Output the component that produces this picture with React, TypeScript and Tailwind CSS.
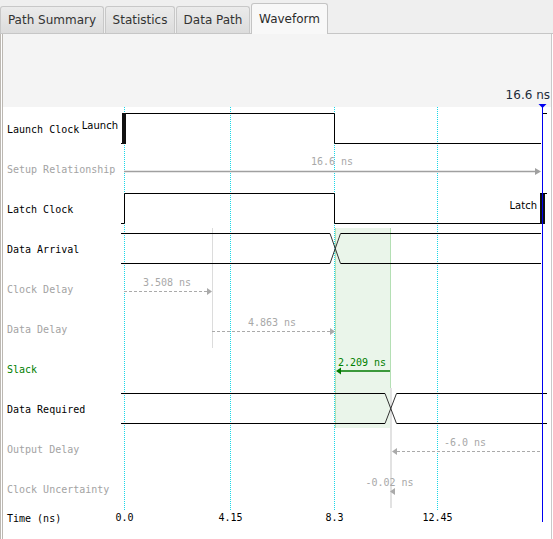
import React from "react";

const tabs = [
  { name: "Path Summary", w: "w-[104px]" },
  { name: "Statistics", w: "w-[70px]" },
  { name: "Data Path", w: "w-[74px]" },
  { name: "Waveform", w: "w-[77px]", active: true },
];

const rows = [
  { label: "Launch Clock", tone: "text-black" },
  { label: "Setup Relationship", tone: "text-[#a3a3a3]" },
  { label: "Latch Clock", tone: "text-black" },
  { label: "Data Arrival", tone: "text-black" },
  { label: "Clock Delay", tone: "text-[#a3a3a3]" },
  { label: "Data Delay", tone: "text-[#a3a3a3]" },
  { label: "Slack", tone: "text-[#008000]" },
  { label: "Data Required", tone: "text-black" },
  { label: "Output Delay", tone: "text-[#a3a3a3]" },
  { label: "Clock Uncertainty", tone: "text-[#a3a3a3]" },
];

const ticks = [
  { x: 124, label: "0.0" },
  { x: 230, label: "4.15" },
  { x: 334, label: "8.3" },
  { x: 437, label: "12.45" },
];

const mono = "'DejaVu Sans Mono', monospace";
const sans = "'DejaVu Sans', sans-serif";
const gray = "#a8a8a8";

function Waveform() {
  return (
    <svg
      className="absolute left-0 top-0 pointer-events-none"
      width={548}
      height={505}
      viewBox="3 34 548 505"
    >
      {/* slack window */}
      <rect x={335} y={228} width={56} height={200} fill="#eaf5ea" />
      <line x1={335.5} y1={228} x2={335.5} y2={428} stroke="#b4dfb4" />
      <line x1={390.5} y1={228} x2={390.5} y2={428} stroke="#b4dfb4" />

      {/* helper verticals */}
      <line x1={212.5} y1={228} x2={212.5} y2={348} stroke="#dcdcdc" />
      <line x1={391} y1={388} x2={391} y2={508} stroke="#e2e2e2" strokeWidth={2} />

      {/* time grid */}
      {ticks.map((t) => (
        <line
          key={t.x}
          x1={t.x + 0.5}
          y1={107}
          x2={t.x + 0.5}
          y2={510}
          stroke="#19d8e8"
          strokeDasharray="1 1"
        />
      ))}

      {/* launch clock */}
      <path d="M121 143.5H124.5V113.5H334.5V143.5H541" fill="none" stroke="#000" />
      <rect x={122} y={113} width={4} height={31} fill="#111" />
      <line x1={543} y1={113.5} x2={547} y2={113.5} stroke="#000" />
      <text x={118} y={129} textAnchor="end" fontFamily={sans} fontSize={10} fill="#000">
        Launch
      </text>

      {/* setup relationship */}
      <line x1={124} y1={171.5} x2={536} y2={171.5} stroke="#a0a0a0" strokeWidth={1.3} />
      <polygon points="535,168 541,171.5 535,175" fill="#a0a0a0" />
      <text x={332} y={165} textAnchor="middle" fontFamily={mono} fontSize={10} fill={gray}>
        16.6 ns
      </text>

      {/* latch clock */}
      <path d="M121 223.5H124.5V193.5H334.5V223.5H543" fill="none" stroke="#000" />
      <rect x={540} y={193} width={5} height={31} fill="#111" />
      <line x1={540} y1={193.5} x2={547} y2={193.5} stroke="#000" />
      <text x={537} y={209} textAnchor="end" fontFamily={sans} fontSize={10} fill="#000">
        Latch
      </text>

      {/* data arrival */}
      <path d="M121 233.5H330M121 263.5H330M340.5 233.5H541M340.5 263.5H541" stroke="#000" />
      <path d="M330 233.5L340.5 263.5M330 263.5L340.5 233.5" stroke="#333" />

      {/* clock delay */}
      <line x1={124} y1={291.5} x2={207} y2={291.5} stroke="#aaa" strokeDasharray="3 2" />
      <polygon points="207,288 212,291.5 207,295" fill="#aaa" />
      <text x={167} y={286} textAnchor="middle" fontFamily={mono} fontSize={10} fill={gray}>
        3.508 ns
      </text>

      {/* data delay */}
      <line x1={212} y1={331.5} x2={330} y2={331.5} stroke="#aaa" strokeDasharray="3 2" />
      <polygon points="330,328 335,331.5 330,335" fill="#aaa" />
      <text x={272} y={326} textAnchor="middle" fontFamily={mono} fontSize={10} fill={gray}>
        4.863 ns
      </text>

      {/* slack */}
      <line x1={340} y1={371} x2={390} y2={371} stroke="#007a00" strokeWidth={1.3} />
      <polygon points="341,367.5 336,371 341,374.5" fill="#007a00" />
      <text x={362} y={366} textAnchor="middle" fontFamily={mono} fontSize={10} fill="#008000">
        2.209 ns
      </text>

      {/* data required */}
      <path d="M121 393.5H385M121 423.5H385M396.5 393.5H547M396.5 423.5H547" stroke="#000" />
      <path d="M385 393.5L396.5 423.5M385 423.5L396.5 393.5" stroke="#333" />

      {/* output delay */}
      <line x1={397} y1={451.5} x2={541} y2={451.5} stroke="#aaa" strokeDasharray="3 2" />
      <polygon points="397,448 392,451.5 397,455" fill="#aaa" />
      <text x={465} y={446} textAnchor="middle" fontFamily={mono} fontSize={10} fill={gray}>
        -6.0 ns
      </text>

      {/* clock uncertainty */}
      <polygon points="395,488 390,491.5 395,495" fill="#aaa" />
      <text x={389.5} y={486} textAnchor="middle" fontFamily={mono} fontSize={10} fill={gray}>
        -0.02 ns
      </text>

      {/* time axis */}
      {ticks.map((t) => (
        <text
          key={t.label}
          x={t.x + 0.5}
          y={521}
          textAnchor="middle"
          fontFamily={mono}
          fontSize={10}
          fill="#000"
        >
          {t.label}
        </text>
      ))}

      {/* end marker */}
      <line x1={542.5} y1={104} x2={542.5} y2={522} stroke="#0000f0" />
      <polygon points="538.5,104 546.5,104 542.5,108" fill="#0000f0" />
    </svg>
  );
}

export default function App() {
  return (
    <div className="w-[553px] h-[539px] overflow-hidden bg-white flex flex-col font-['DejaVu_Sans',sans-serif]">
      {/* tabs */}
      <div className="flex items-end gap-[1px] h-[34px] shrink-0 border-b border-[#c6c6c6] bg-[#efefef]">
        {tabs.map((t) =>
          t.active ? (
            <div
              key={t.name}
              className={`${t.w} h-[31px] -mb-px relative flex items-center justify-center border border-b-0 border-[#c4c4c4] rounded-t-[3px] bg-[#f8f8f8] text-[12px] text-[#2b2b2b]`}
            >
              {t.name}
            </div>
          ) : (
            <div
              key={t.name}
              className={`${t.w} h-[27px] flex items-center justify-center border border-b-0 border-[#c8c8c8] rounded-t-[3px] bg-linear-to-b from-[#ebebeb] to-[#dcdcdc] text-[12px] text-[#333]`}
            >
              {t.name}
            </div>
          )
        )}
      </div>

      {/* panel */}
      <div className="flex-1 flex flex-col border-l-[3px] border-double border-[#bcb8b2] border-r border-r-[#c9c9c9] border-r-solid mr-[1px] bg-white">
        <div className="relative flex-1 flex flex-col">
          <div className="h-[73px] shrink-0 bg-[#f4f4f4] flex items-end justify-end pr-[1px] pb-[5px]">
            <span className="text-[12px] leading-[14px] text-[#1c2b3a]">16.6 ns</span>
          </div>
          <div className="pt-[2px] pl-[4px] flex flex-col font-['DejaVu_Sans_Mono',monospace] text-[10px]">
            {rows.map((r) => (
              <div key={r.label} className={`h-10 flex items-center ${r.tone}`}>
                {r.label}
              </div>
            ))}
            <div className="h-[18px] flex items-center text-black">Time (ns)</div>
          </div>
          <Waveform />
        </div>
      </div>
    </div>
  );
}
